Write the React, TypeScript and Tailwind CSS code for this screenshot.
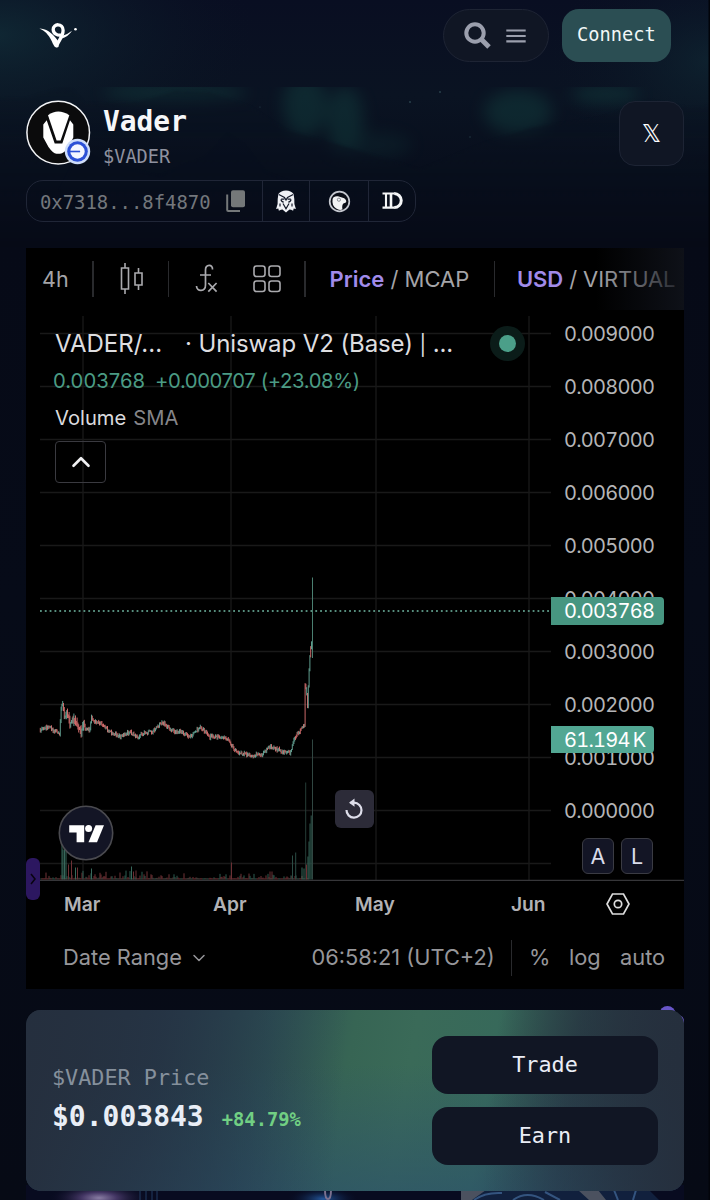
import React from "react";
import { LuChevronDown, LuChevronUp } from "react-icons/lu";

const mono = "font-['DejaVu_Sans_Mono',monospace]";

const gridRows = [334, 387, 440, 493, 546, 599, 652, 705, 758, 811, 864];
const gridCols = [83, 231, 376, 529];

const pricePoints: [number, number][] = [
  [40, 730], [50, 727], [55, 731], [60.7, 735], [61.3, 714], [63.3, 701], [65.3, 719], [67.7, 713],
  [70.7, 723], [75, 720], [81.7, 732], [84, 724], [87, 730], [90.7, 730], [92, 718], [96.7, 723],
  [101.7, 723], [110, 732], [121.7, 737], [130, 732], [138.3, 737], [145, 732], [153.3, 732],
  [163.3, 722], [170, 729], [176.7, 732], [181, 731], [190, 737], [201.7, 727], [210, 737],
  [220, 737], [228.3, 740], [236.7, 751.5], [246.7, 754], [253.3, 757], [258.3, 753], [261.7, 756],
  [265, 751], [271.7, 747], [280, 750], [286.7, 753], [291.7, 752.5], [293.3, 743], [296.7, 735],
  [301.7, 730], [305.3, 725], [305.8, 685], [307.3, 693], [308.3, 707], [309.7, 673], [310.7, 657], [312, 643],
];

function noise(seed: number) {
  const v = Math.sin(seed * 127.1 + 31.7) * 43758.5453;
  return v - Math.floor(v);
}

function priceAt(x: number) {
  for (let i = 1; i < pricePoints.length; i++) {
    const [x0, y0] = pricePoints[i - 1];
    const [x1, y1] = pricePoints[i];
    if (x <= x1) return y0 + ((y1 - y0) * (x - x0)) / (x1 - x0);
  }
  return pricePoints[pricePoints.length - 1][1];
}

const candles = Array.from({ length: 340 }, (_, i) => {
  const x = 40.3 + i * 0.8;
  const a = priceAt(x) + (noise(i) - 0.5) * 3.4;
  const b = priceAt(Math.min(x + 0.8, 312)) + (noise(i + 1) - 0.5) * 3.4;
  const wick = x > 61 && x < 85 ? 5 : 1.6;
  const top = Math.min(a, b) - noise(i + 500) * wick - 0.4;
  const bottom = Math.max(a, b) + noise(i + 900) * wick + 0.4;
  const up = x > 292 ? noise(i + 7) > 0.35 : b < a;
  return { x, top, bottom, color: up ? "#6aae9e" : "#e27474" };
});

const tallBars: [number, number, string][] = [
  [62, 45, "#37685b"], [63, 30, "#37685b"], [64.5, 49, "#37685b"], [66, 36, "#37685b"], [68.5, 15, "#6b3034"],
  [71.5, 19, "#6b3034"], [75.5, 12, "#37685b"], [77.5, 12, "#6b3034"], [91.5, 11, "#37685b"],
  [131.5, 13, "#37685b"], [133.5, 8, "#6b3034"], [136, 9, "#6b3034"], [231.5, 17, "#6b3034"],
  [270, 8, "#6b3034"], [272, 8, "#6b3034"], [292.5, 24, "#2b4c44"], [295.7, 27, "#2b4c44"],
  [302, 12, "#37685b"], [304, 11, "#37685b"], [305.7, 97, "#263d37"], [306.5, 15, "#6b3034"],
  [308, 23, "#37685b"], [309, 38, "#2f584e"], [310, 56, "#2f584e"], [311.2, 64, "#2f584e"], [312.5, 140, "#304641"],
];

function Backdrop() {
  return (
    <svg className="absolute inset-0 h-[1200px] w-[710px]" viewBox="0 0 710 1200" aria-hidden="true">
      <defs>
        <linearGradient id="sky" x2="0" y2="1">
          <stop stopColor="#090e22" />
          <stop offset=".08" stopColor="#0a1322" />
          <stop offset=".2" stopColor="#060a17" />
          <stop offset=".5" stopColor="#060b18" />
          <stop offset="1" stopColor="#060a15" />
        </linearGradient>
        <radialGradient id="haze">
          <stop stopColor="#12303a" stopOpacity=".85" />
          <stop offset="1" stopColor="#0b1524" stopOpacity="0" />
        </radialGradient>
        <linearGradient id="fade" x2="0" y2="1">
          <stop stopColor="#0b1523" stopOpacity=".3" />
          <stop offset="1" stopColor="#060a16" />
        </linearGradient>
        <filter id="soft" x="-50%" y="-50%" width="200%" height="200%" colorInterpolationFilters="sRGB">
          <feGaussianBlur stdDeviation="8" />
        </filter>
        <filter id="edge" x="-5%" y="-10%" width="110%" height="120%" colorInterpolationFilters="sRGB">
          <feGaussianBlur stdDeviation="1.2" />
        </filter>
        <clipPath id="scene">
          <rect y="87" width="710" height="160" />
        </clipPath>
      </defs>
      <rect width="710" height="1200" fill="url(#sky)" />
      <ellipse cx="-5" cy="35" rx="260" ry="130" fill="url(#haze)" opacity=".85" />
      <ellipse cx="710" cy="60" rx="160" ry="120" fill="url(#haze)" opacity=".6" />
      <g clipPath="url(#scene)">
        <g filter="url(#soft)" fill="#154845" opacity=".4">
          <ellipse cx="175" cy="92" rx="72" ry="10" />
          <ellipse cx="305" cy="105" rx="22" ry="32" />
          <ellipse cx="345" cy="120" rx="18" ry="34" />
          <ellipse cx="518" cy="112" rx="34" ry="22" />
          <ellipse cx="605" cy="94" rx="34" ry="10" />
          <ellipse cx="370" cy="145" rx="42" ry="13" opacity=".5" />
        </g>
        <path
          d="M-20 100 28 98 60 88 70 87 85 104 140 102 175 91 210 92 250 107 285 130 340 145 420 170 480 145 530 128 600 118 650 100 690 108 730 105V262H-20Z"
          fill="url(#fade)"
          filter="url(#edge)"
        />
        <path d="M160 176 185 165 205 158 228 134 244 145 265 172 310 190H60L80 150 110 165Z" fill="#070e1e" opacity=".3" filter="url(#edge)" />
      </g>
      <g fill="#28404b">
        <circle cx="440" cy="92" r="1" />
        <circle cx="410" cy="102" r="1" />
        <circle cx="470" cy="137" r=".7" />
        <circle cx="260" cy="107" r=".6" />
      </g>
      <rect x="708.5" width="1.5" height="1200" fill="#02040a" />
    </svg>
  );
}

function BrandLogo() {
  return (
    <svg className="h-7 w-[38px] overflow-visible" viewBox="0 0 38 28" fill="#fff">
      <path d="M-.6 6.6C5.5 6.8 11.5 10 17.8 18.5L18.5 25C14.5 26.8 13.6 23 11.4 18.5 8.3 12.5 5 9-.6 6.6Z" />
      <path d="M16.9 23.6C18.6 18.2 23.2 14.4 23.1 8.2 23 1 13.2 1.2 13.2 7.4c0 4.2 4.4 6.4 8.2 5.6" fill="none" stroke="#fff" strokeWidth="3.3" strokeLinecap="round" />
      <path d="M20.5 14.4Q27.5 12.8 32 8.8 28.6 14.6 21 16.8Z" />
      <circle cx="35.5" cy="7.2" r="1.3" />
    </svg>
  );
}

function Header() {
  return (
    <header className="flex h-[71px] items-center pl-[40px] pr-[39px]">
      <BrandLogo />
      <div className="ml-auto mr-[13px] flex h-[53px] w-[106px] items-center rounded-full border-[1.5px] border-[#1e2434] bg-[#101624] pl-[20px]">
        <svg className="h-[27px] w-[27px]" viewBox="0 0 27 27" fill="none" stroke="#9b9fad">
          <circle cx="11" cy="11" r="8.7" strokeWidth="4" />
          <path d="m17 17 8 8" strokeWidth="5" />
        </svg>
        <svg className="ml-[15px] h-4 w-5" viewBox="0 0 20 16" stroke="#9b9fad" strokeWidth="2.1">
          <path d="M.3 2.5h19.4M.3 8h19.4M.3 13.4h19.4" />
        </svg>
      </div>
      <button className={`h-[53px] w-[109px] rounded-[17px] bg-[#2b4e53] text-[18.7px] text-[#f1f7f7] ${mono}`}>Connect</button>
    </header>
  );
}

function Avatar() {
  return (
    <svg className="h-[66px] w-[66px]" viewBox="0 0 66 66">
      <circle cx="32.2" cy="32.6" r="31.3" fill="#0b0b0c" stroke="#f3f4f6" strokeWidth="1.5" />
      <path d="M17.3 24.5 20.7 20.2 28.7 43.5H36.3L44 20.2l3.3 4.3v13L42.5 47Q38 53.5 34 53.7h-3.5Q27 53.5 22.5 47l-5.2-9.5Z" fill="#fff" />
      <path d="M22 15.3Q32 7.8 43.3 15.3L34.6 40.5h-4Z" fill="#fff" />
      <circle cx="51.5" cy="51.5" r="12.7" fill="#cfdefa" />
      <circle cx="51.5" cy="51.5" r="10.3" fill="#2c51d6" />
      <circle cx="51.5" cy="51.5" r="7.2" fill="#f4f7ff" />
      <path d="M43.7 51.5h10.4" stroke="#2c51d6" strokeWidth="1.6" />
    </svg>
  );
}

function Owl() {
  return (
    <svg className="h-[23px] w-5" viewBox="0 0 20 23">
      <path d="M2.4 4Q5 .5 10 .5T17.6 4l.7 5 .1 5 1.5 5-2.2-.5-.6 2.2-2-1-1.6-.2L10 22.5l-3.5-3-1.6.2-2 1-.6-2.2-2.2.5 1.5-5 .1-5Z" fill="#eff1f5" />
      <path d="M2.8 4.5 8.5 7.4 10 10l1.5-2.6 5.7-2.9M5.2 9.2h3.2M14.8 9.2h-3.2M4.9 9.4q.4 2.5 2.8 2.8M15.1 9.4q-.4 2.5-2.8 2.8M7 13.5l3 5.3 3-5.3M4 13.5v3M16 13.5v3" fill="none" stroke="#111727" strokeWidth="1.2" />
    </svg>
  );
}

function Gecko() {
  return (
    <svg className="h-[23px] w-[23px]" viewBox="0 0 23 23">
      <circle cx="11.5" cy="11.5" r="9.8" fill="#0a0d16" stroke="#c4c7ce" strokeWidth="1.7" />
      <path d="M4.6 9Q5.5 5.8 10 6.3l4.7 1.4q3.4 1 3.6 3.9-.4 1.7-2.6 1.6-2.2 1.8-1.2 6.2-3.3 1.3-6.3-.9Q3.6 15.5 4.6 9Z" fill="#f2f3f4" />
      <circle cx="10.9" cy="9.7" r="1.6" fill="none" stroke="#737780" strokeWidth=".8" />
    </svg>
  );
}

function TokenHeading() {
  return (
    <section className="mt-[29px] px-[26px]">
      <div className="flex h-[66px] items-center">
        <Avatar />
        <div className={`ml-[11px] pt-[9px] ${mono}`}>
          <h1 className="text-[27.9px] leading-[38px] font-bold tracking-normal text-[#f6f7f9]">Vader</h1>
          <p className="text-[18.6px] leading-[32px] text-[#8e919f]">$VADER</p>
        </div>
        <button className="ml-auto flex h-[65px] w-[65px] items-center justify-center rounded-[16px] border-[1.5px] border-[#1d2434] bg-[#101624] pt-[2px] font-['DejaVu_Sans'] text-[24px] text-white">𝕏</button>
      </div>
      <div className="mt-[14px] flex h-[42px] w-[390px] items-stretch rounded-[17px] border-[1.5px] border-[#202637]">
        <div className={`flex w-[235px] shrink-0 items-center pl-[13px] text-[18.9px] text-[#73777c] ${mono}`}>
          <span className="pt-[2px]">0x7318...8f4870</span>
          <svg className="ml-[15px] h-[22px] w-[20px]" viewBox="0 0 20 22">
            <rect x="5" y=".3" width="14" height="17" rx="2" fill="#747879" />
            <path d="M1.2 4.5V20a1 1 0 0 0 1 1H14" fill="none" stroke="#747879" strokeWidth="2" />
          </svg>
        </div>
        <div className="flex w-[47px] items-center justify-center border-l-[1.5px] border-[#202637] pr-px"><Owl /></div>
        <div className="flex w-[59px] items-center justify-center border-l-[1.5px] border-[#202637]"><Gecko /></div>
        <div className="flex flex-1 items-center justify-center border-l-[1.5px] border-[#202637]">
          <svg className="h-5 w-[21px]" viewBox="0 0 21 20" fill="none" stroke="#f5f6f7" strokeWidth="2.1">
            <path d="M.5 2.5h12M.5 16.6h12M4 2.5v14.1" />
            <path d="M9 2v15" strokeWidth="2.6" />
            <path d="M12.2 2.5a7 7 0 0 1 0 14.1" strokeWidth="3" />
          </svg>
        </div>
      </div>
    </section>
  );
}

const Divider = () => <span className="h-9 w-[1.5px] shrink-0 bg-[#292a2d]" />;

function Toolbar() {
  return (
    <div className="relative flex h-[62px] items-center overflow-hidden pl-4 text-[21.5px] whitespace-nowrap text-[#a4a4a8]">
      <span className="w-[50px]">4h</span>
      <Divider />
      <svg className="ml-[26px] h-8 w-[24px] shrink-0" viewBox="0 0 24 32" fill="none" stroke="#aaaaae" strokeWidth="1.6">
        <path d="M1.5 5h7v21h-7ZM5 0v5M5 26v5M15 10h7v12h-7ZM18.5 5v5M18.5 22v5" />
      </svg>
      <span className="w-[24px] shrink-0" />
      <Divider />
      <svg className="ml-[26px] h-8 w-6 shrink-0" viewBox="0 0 24 32" fill="none" stroke="#aaaaae" strokeWidth="1.7">
        <path d="M17.5 6.5C18 1 10.5 1 10.5 7v15c0 7-9 7-9 1M5 12h11M13.3 20l8.3 8.7M21.6 20l-8.3 8.7" />
      </svg>
      <svg className="ml-[34px] h-7 w-7 shrink-0" viewBox="0 0 28 28" fill="none" stroke="#aaaaae" strokeWidth="1.6">
        <rect x="1" y="1" width="11" height="10.5" rx="2.5" /><rect x="16" y="1" width="11" height="10.5" rx="2.5" />
        <rect x="1" y="16" width="11" height="10.5" rx="2.5" /><rect x="16" y="16" width="11" height="10.5" rx="2.5" />
      </svg>
      <span className="w-[23px] shrink-0" />
      <Divider />
      <span className="ml-[24px] w-[164px] shrink-0 text-[22px]"><b className="font-semibold text-[#a18bea]">Price</b> / MCAP</span>
      <Divider />
      <span className="ml-[22px] text-[22px] tracking-[-0.1px]"><b className="font-semibold text-[#a18bea]">USD</b> / VIRTUAL</span>
      <div className="absolute inset-y-0 right-0 w-[88px] bg-linear-to-r from-[#10131b]/0 to-[#10131b]/90" />
    </div>
  );
}

function Plot() {
  return (
    <svg className="absolute inset-0 h-[571px] w-[658px]" viewBox="26 310 658 571" aria-hidden="true">
      <g stroke="#191919" strokeWidth="1.3">
        {gridRows.map((y) => <path key={y} d={`M40 ${y - 0.5}H551`} />)}
        {gridCols.map((x) => <path key={x} d={`M${x} 316V880`} />)}
      </g>
      <path d="M40 611H551" stroke="#568d7d" strokeWidth="1.8" strokeDasharray="1.8 3.03" />
      {candles.map((c, i) => <path key={i} d={`M${c.x} ${c.top}V${c.bottom}`} stroke={c.color} strokeWidth=".9" />)}
      <path d="M312.5 577.5V658" stroke="#4a7f70" />
      {Array.from({ length: 268 }, (_, i) => (
        <path
          key={i}
          d={`M${41 + i} 879.5v-${1.2 + Math.pow(noise(i + 70), 5) * (i < 115 ? 9 : 5)}`}
          stroke={noise(i + 40) > 0.6 ? "#2d5c51" : "#713236"}
          strokeWidth="1"
        />
      ))}
      {tallBars.map(([x, h, color]) => <path key={x} d={`M${x} 879.5v-${h}`} stroke={color} strokeWidth="1" />)}
      <path d="M40 880.5H684" stroke="#363639" strokeWidth="1.4" />
    </svg>
  );
}

function TradingMark() {
  return (
    <svg className="absolute top-[495px] left-[32px] h-[56px] w-[56px]" viewBox="0 0 56 56">
      <circle cx="28" cy="28" r="26.7" fill="#131525" stroke="#4a4a4f" strokeWidth="1.6" />
      <g fill="#fff">
        <path d="M11.2 20.3h15v17h-7.6v-9.8h-7.4Z" />
        <circle cx="30.6" cy="23.5" r="3.5" />
        <path d="M37.6 20.3H46l-7 17h-8.5Z" />
      </g>
    </svg>
  );
}

function Chart() {
  return (
    <div className="relative h-[571px]">
      <Plot />
      <div className="absolute top-[15px] left-[27px]">
        <div className="flex h-[37px] items-center text-[24px] whitespace-nowrap text-[#dedee0]">
          <span className="w-[132px] pl-[2px]">VADER/...</span>
          <span className="w-[305px] tracking-[-0.1px]">· Uniswap V2 (Base) <span className="text-[20px]">|</span> ...</span>
          <span className="flex h-[35px] w-[35px] items-center justify-center rounded-full bg-[#0b1c19]">
            <span className="h-[17px] w-[17px] rounded-full bg-[#4b9f89]" />
          </span>
        </div>
        <div className="flex h-[38px] items-center text-[20.3px] whitespace-nowrap text-[#4b9b84]">
          <span className="w-[102px]">0.003768</span><span className="tracking-[-0.4px]">+0.000707 (+23.08%)</span>
        </div>
        <div className="flex h-[36px] items-center gap-[7px] pl-[2px] text-[20.2px] text-[#dadadd]">
          <span>Volume</span><span className="text-[#858589]">SMA</span>
        </div>
        <button className="mt-[5px] ml-[2px] flex h-[42px] w-[51px] items-center justify-center rounded-[4px] border-[1.5px] border-[#3a3a40] text-[#f0f0f2]">
          <LuChevronUp size={30} strokeWidth={2.1} />
        </button>
      </div>
      <div className="absolute top-[-3px] left-[538px] text-[20px] tracking-[-0.75px] text-[#b5b5b7] tabular-nums">
        {["0.009000", "0.008000", "0.007000", "0.006000", "0.005000", "0.004000", "0.003000", "0.002000", "0.001000", "0.000000"].map((price) => (
          <div key={price} className="flex h-[53px] items-center">{price}</div>
        ))}
      </div>
      <div className="absolute top-[287px] left-[525px] flex h-[28px] w-[113px] items-center rounded-r-[4px] bg-[#479681] pl-[13px] text-[20px] tracking-[-0.75px] text-white tabular-nums">0.003768</div>
      <div className="absolute top-[416px] left-[525px] flex h-[27px] w-[103px] items-center rounded-r-[4px] bg-[#52a793] pl-[13px] text-[20px] tracking-[-0.75px] text-white tabular-nums">61.194<span className="ml-[3px]">K</span></div>
      <div className="absolute top-[528px] left-[556px] flex gap-[7px] text-[21.5px] text-[#d9dcea]">
        <button className="h-[36px] w-[32px] rounded-[6px] border-[1.5px] border-[#3a3b43] bg-[#131525]">A</button>
        <button className="h-[36px] w-[32px] rounded-[6px] border-[1.5px] border-[#3a3b43] bg-[#131525]">L</button>
      </div>
      <TradingMark />
      <button className="absolute top-[480px] left-[309px] flex h-[38px] w-[39px] items-center justify-center rounded-[6px] bg-[#2c2b38] pr-[2px]">
        <svg className="h-6 w-6" viewBox="0 0 24 24" fill="none" stroke="#dedeea" strokeWidth="2.2">
          <path d="M4.5 13a7.5 7.5 0 1 0 7.5-7.3H8.5" />
          <path d="M12.5 1.5 7 5.7l5.5 4Z" fill="#dedeea" stroke="none" />
        </svg>
      </button>
      <div className="absolute top-[548px] left-0 flex h-[42px] w-[14px] items-center justify-center rounded-[6px] bg-[#2c1760]">
        <svg className="h-3 w-[6px]" viewBox="0 0 6 12" fill="none" stroke="#08040f" strokeWidth="1.5"><path d="m1 1 4 5-4 5" /></svg>
      </div>
    </div>
  );
}

function ChartFooter() {
  return (
    <>
      <div className="flex h-[46px] items-center text-[19.2px] font-semibold text-[#b2b2b5]">
        <span className="w-[148px] pl-[38px]">Mar</span>
        <span className="w-[144px] pl-[39px]">Apr</span>
        <span className="w-[148px] pl-[37px]">May</span>
        <span className="w-[140px] pl-[45px]">Jun</span>
        <svg className="h-[22px] w-6" viewBox="0 0 24 22" fill="none" stroke="#ddd" strokeWidth="1.7">
          <path d="M6.5 1h11L23 11l-5.5 10h-11L1 11Z" /><circle cx="12" cy="11" r="3.7" />
        </svg>
      </div>
      <div className="flex h-[61px] items-center text-[21.8px] whitespace-nowrap text-[#96969a]">
        <span className="ml-[37px]">Date Range</span>
        <LuChevronDown className="ml-[7px]" size={20} strokeWidth={1.8} />
        <div className="ml-auto flex items-center">
          <span className="w-[199px]">06:58:21 (UTC+2)</span>
          <Divider />
          <span className="ml-[17px] w-[40px]">%</span>
          <span className="w-[51px]">log</span>
          <span className="w-[64px]">auto</span>
        </div>
      </div>
    </>
  );
}

function PriceCard() {
  return (
    <section className={`relative flex h-[181px] items-center rounded-[15px] bg-[linear-gradient(180deg,transparent_30%,#2b506d99_100%),linear-gradient(100deg,#252f3e_0%,#26384a_20%,#2d5055_36%,#376554_48%,#3a6a58_57%,#37695a_69%,#2b4449_81%,#252f3d_96%)] px-[26px] ${mono}`}>
      <div className="absolute inset-0 rounded-[15px] bg-[linear-gradient(95deg,#252f3e_0%,#25344488_28%,transparent_48%,transparent_70%,#252f3db3_90%,#252f3d_100%)]" />
      <div className="relative pb-[4px]">
        <p className="text-[21.8px] leading-[36px] text-[#85909c]">$VADER Price</p>
        <p className="flex h-[42px] items-center whitespace-nowrap">
          <strong className="pt-px text-[28px] font-bold text-[#e9eef6]">$0.003843</strong>
          <span className="mt-[7px] ml-[18px] text-[18.8px] font-bold text-[#71cf83]">+84.79%</span>
        </p>
      </div>
      <div className="relative ml-auto flex w-[226px] flex-col gap-[13px] text-[21.8px] text-[#eaedf6]">
        <button className="h-[58px] rounded-[16px] bg-[#111624]">Trade</button>
        <button className="h-[58px] rounded-[16px] bg-[#111624]">Earn</button>
      </div>
    </section>
  );
}

function LowerArtwork() {
  return (
    <svg className="absolute top-[1185px] left-[26px] h-[15px] w-[658px]" viewBox="26 1185 658 15" aria-hidden="true">
      <defs>
        <radialGradient id="violet"><stop stopColor="#a091bb" /><stop offset=".35" stopColor="#4e3e70" /><stop offset="1" stopColor="#0b0b24" stopOpacity="0" /></radialGradient>
        <radialGradient id="blue"><stop stopColor="#24579c" /><stop offset="1" stopColor="#06102b" stopOpacity="0" /></radialGradient>
      </defs>
      <rect x="26" y="1185" width="658" height="15" fill="#080b20" />
      <ellipse cx="99" cy="1198" rx="50" ry="16" fill="url(#violet)" opacity=".85" />
      <ellipse cx="323" cy="1199" rx="35" ry="12" fill="url(#blue)" />
      <path d="M140 1190v10M146 1190v10M152 1190v10M157 1190v10" stroke="#203b60" strokeWidth="1" />
      <path d="M325 1190q0 9 3 9t3-9" fill="none" stroke="#7b718f" strokeWidth="2" />
      <path d="M461 1190h188l10 10H461Z" fill="#11203d" />
      <path d="M461 1190h25l-14 10h-11ZM578 1190h20l8 10h-17Z" fill="#4b515f" />
      <path d="M474 1200q11-8 28-7M513 1200q14-10 31 0M545 1192l15 8M614 1190l4 10M636 1190l-3 10" fill="none" stroke="#34547f" strokeWidth="2" />
    </svg>
  );
}

export default function App() {
  return (
    <main className="relative h-[1200px] w-[710px] overflow-hidden bg-[#060a16] font-['Inter',sans-serif]">
      <Backdrop />
      <LowerArtwork />
      <div className="relative">
        <Header />
        <TokenHeading />
        <section className="mx-[26px] mt-[26px] h-[741px] bg-black">
          <Toolbar />
          <Chart />
          <ChartFooter />
        </section>
        <div className="relative mx-[26px] mt-[21px]">
          <svg className="absolute top-[-4px] left-[630px] h-7 w-7" viewBox="0 0 28 28" fill="#6856c8">
            <circle cx="11.5" cy="8" r="8" /><circle cx="22" cy="15" r="6" />
          </svg>
          <PriceCard />
        </div>
      </div>
    </main>
  );
}
